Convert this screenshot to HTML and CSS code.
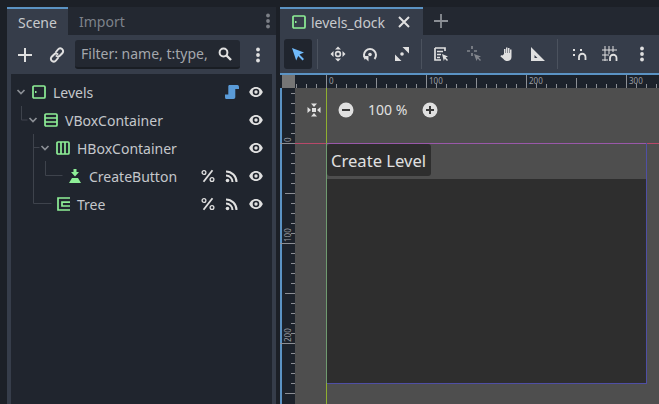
FILE: index.html
```html
<!DOCTYPE html>
<html lang="en">
<head>
<meta charset="utf-8">
<title>levels_dock</title>
<link rel="stylesheet" href="styles.css">
</head>
<body>
<svg class="defs" width="0" height="0">
  <defs>
    <symbol id="eye" viewBox="0 0 14 14"><path d="M7 2C3.5 2 1.2 4.5.2 7c1 2.5 3.3 5 6.800 5s5.800-2.500 6.800-5C12.800 4.500 10.500 2 7 2zm0 1.700A3.300 3.300 0 1 1 7 10.300 3.300 3.300 0 0 1 7 3.700z" fill="#e0e0e0"/><circle cx="7" cy="7" r="1.700" fill="#e0e0e0"/></symbol>
    <symbol id="pct" viewBox="0 0 14 14"><path d="M11.500 1.200 2.500 12.800" stroke="#e0e0e0" stroke-width="1.800" fill="none"/><circle cx="3" cy="3.500" r="1.900" stroke="#e0e0e0" stroke-width="1.300" fill="none"/><circle cx="11" cy="10.500" r="1.900" stroke="#e0e0e0" stroke-width="1.300" fill="none"/></symbol>
    <symbol id="sig" viewBox="0 0 14 14"><circle cx="2.500" cy="11.500" r="1.800" fill="#e0e0e0"/><path d="M1 6.500a6.500 6.500 0 0 1 6.500 6.500M1 2.500A10.500 10.500 0 0 1 11.500 13" stroke="#e0e0e0" stroke-width="2" fill="none"/></symbol>
    <symbol id="dots" viewBox="0 0 4 16"><circle cx="2" cy="2.500" r="1.900"/><circle cx="2" cy="8" r="1.900"/><circle cx="2" cy="13.500" r="1.900"/></symbol>
  </defs>
</svg>
<div class="app">
  <section class="dock-left">
    <div class="tabbar">
      <div class="tab tab-on">Scene</div>
      <div class="tab tab-off">Import</div>
      <svg class="grip" viewBox="0 0 4 16"><use href="#dots"/></svg>
    </div>
    <div class="scene-tools">
      <svg class="ico16" viewBox="0 0 16 16"><path d="M8 1v14M1 8h14" stroke="#e0e0e0" stroke-width="2" fill="none"/></svg>
      <svg class="ico16 link" viewBox="0 0 16 16"><g stroke="#e0e0e0" stroke-width="2" fill="none" stroke-linecap="round"><path d="M7 5l2-2.500a2.800 2.800 0 0 1 4.500 3.500L11 8.500a2.800 2.800 0 0 1-3.500.5"/><path d="M9 11l-2 2.500A2.800 2.800 0 0 1 2.500 10L5 7.500a2.800 2.800 0 0 1 3.500-.5"/></g></svg>
      <div class="filter">
        <span class="filter-text">Filter: name, t:type,</span>
        <svg class="ico14" viewBox="0 0 14 14"><circle cx="5.500" cy="5.500" r="3.900" stroke="#e0e0e0" stroke-width="2" fill="none"/><path d="M8.500 8.500 13 13" stroke="#e0e0e0" stroke-width="2.400"/></svg>
      </div>
      <svg class="menu-dots" viewBox="0 0 4 16"><use href="#dots"/></svg>
    </div>
    <div class="tree">
      <svg class="guides" width="261" height="150"><path d="M10.500 32v14h6M22.500 60v69.500h18M22.500 73.500h6M34.500 87v14.500h17" stroke="#3e434c" fill="none"/></svg>
      <div class="row d0">
        <svg class="arrow" viewBox="0 0 10 10"><path d="M1.500 3 5 6.500 8.500 3" stroke="#8b8f95" stroke-width="1.700" fill="none"/></svg>
        <svg class="node" viewBox="0 0 14 14"><rect x="1" y="1" width="12" height="12" rx="1" stroke="#8eef97" stroke-width="1.700" fill="none"/><rect x="3" y="6" width="1.500" height="2" fill="#8eef97"/></svg>
        <span class="name">Levels</span>
        <svg class="st script" viewBox="0 0 14 14"><path d="M4.500 0H12.500C13.500 0 14 1 14 2.500V4H10.300V12C10.300 13.300 9.500 14 8.500 14H1C.3 14 0 13 0 11.500V9.500H3.300V1.500C3.300 .5 3.800 0 4.500 0z" fill="#5a9bd8"/></svg>
        <svg class="st" viewBox="0 0 14 14"><use href="#eye"/></svg>
      </div>
      <div class="row d1">
        <svg class="arrow" viewBox="0 0 10 10"><path d="M1.500 3 5 6.500 8.500 3" stroke="#8b8f95" stroke-width="1.700" fill="none"/></svg>
        <svg class="node" viewBox="0 0 14 14"><rect x="1" y="1" width="12" height="12" rx="1" stroke="#8eef97" stroke-width="1.700" fill="none"/><path d="M1 5h12M1 9h12" stroke="#8eef97" stroke-width="1.700"/></svg>
        <span class="name">VBoxContainer</span>
        <svg class="st" viewBox="0 0 14 14"><use href="#eye"/></svg>
      </div>
      <div class="row d2">
        <svg class="arrow" viewBox="0 0 10 10"><path d="M1.500 3 5 6.500 8.500 3" stroke="#8b8f95" stroke-width="1.700" fill="none"/></svg>
        <svg class="node" viewBox="0 0 14 14"><rect x="1" y="1" width="12" height="12" rx="1" stroke="#8eef97" stroke-width="1.700" fill="none"/><path d="M5 1v12M9 1v12" stroke="#8eef97" stroke-width="1.700"/></svg>
        <span class="name">HBoxContainer</span>
        <svg class="st" viewBox="0 0 14 14"><use href="#eye"/></svg>
      </div>
      <div class="row d3">
        <svg class="node" viewBox="0 0 14 14"><path d="M5.500 0h3v3H11L7 7.500 3 3h2.500zM4 9h6l3 5H1z" fill="#8eef97"/></svg>
        <span class="name">CreateButton</span>
        <svg class="st" viewBox="0 0 14 14"><use href="#pct"/></svg>
        <svg class="st" viewBox="0 0 14 14"><use href="#sig"/></svg>
        <svg class="st" viewBox="0 0 14 14"><use href="#eye"/></svg>
      </div>
      <div class="row d4">
        <svg class="node" viewBox="0 0 14 14"><path d="M14 1H2V13H14M14 5.200H6V9H14" stroke="#8eef97" stroke-width="1.700" fill="none"/></svg>
        <span class="name">Tree</span>
        <svg class="st" viewBox="0 0 14 14"><use href="#pct"/></svg>
        <svg class="st" viewBox="0 0 14 14"><use href="#sig"/></svg>
        <svg class="st" viewBox="0 0 14 14"><use href="#eye"/></svg>
      </div>
    </div>
  </section>

  <section class="dock-right">
    <div class="tabbar">
      <div class="tab tab-on tab-file">
        <svg class="node" viewBox="0 0 14 14"><rect x="1" y="1" width="12" height="12" rx="1" stroke="#8eef97" stroke-width="1.700" fill="none"/><rect x="3" y="6" width="1.500" height="2" fill="#8eef97"/></svg>
        <span class="file-name">levels_dock</span>
        <svg class="close" viewBox="0 0 12 12"><path d="M1 1l10 10M11 1 1 11" stroke="#e0e0e0" stroke-width="2"/></svg>
      </div>
      <svg class="newtab" viewBox="0 0 14 14"><path d="M7 0v14M0 7h14" stroke="#8b8f95" stroke-width="1.800"/></svg>
    </div>
    <div class="toolbar">
      <div class="tool tool-on"><svg viewBox="0 0 16 16"><path d="M2 2l12 4.500-4.500 2L14 13l-1.500 1.500-4.300-4.500-2 4.500z" fill="#70bafa"/></svg></div>
      <i class="sep"></i>
      <div class="tool"><svg viewBox="0 0 16 16"><path d="M8 .5 11 3.500H5zM8 15.500 11 12.500H5zM.5 8 3.500 5V11zM15.500 8 12.500 5V11z" fill="#e0e0e0"/><circle cx="8" cy="8" r="2.400" stroke="#e0e0e0" stroke-width="1.600" fill="none"/></svg></div>
      <div class="tool"><svg viewBox="0 0 16 16"><path d="M3.500 13A6 6 0 1 1 12.500 13" stroke="#e0e0e0" stroke-width="2" fill="none"/><path d="M1 10h5.500v5.500z" fill="#e0e0e0"/><circle cx="8" cy="8.500" r="1.800" fill="#e0e0e0"/></svg></div>
      <div class="tool"><svg viewBox="0 0 16 16"><path d="M8.500 1H15V7.500zM1 8.500V15H7.500z" fill="#e0e0e0"/><circle cx="8" cy="8" r="1.800" fill="#e0e0e0"/></svg></div>
      <i class="sep sep2"></i>
      <div class="tool t-list"><svg viewBox="0 0 16 16"><path d="M2 2h10v3M2 2v12h6M4 5.500h6M4 8.500h4M4 11.500h3" stroke="#e0e0e0" stroke-width="1.700" fill="none"/><path d="M9 8l6 2.500-2.300 1L15 14l-1 1-2.200-2.300L10.800 15z" fill="#e0e0e0"/></svg></div>
      <div class="tool t-dim"><svg viewBox="0 0 16 16"><path d="M5 0v3M5 7v3M0 5h3M7 5h3" stroke="#e0e0e0" stroke-width="1.700"/><path d="M7 8l7 2.500-2.500 1L14 14l-1 1-2.300-2.500L9.500 15z" fill="#e0e0e0"/></svg></div>
      <div class="tool t-hand"><svg viewBox="0 0 16 16"><path d="M5 8V3h1.500v4H7V1.500h1.500V7H9V2h1.500v5h.5V3.500h1.500V11c0 2.500-1.500 4-4 4-2 0-3-.5-4-2L1.500 10.500c0-1 1-1.500 2-1z" fill="#e0e0e0"/></svg></div>
      <div class="tool t-ruler"><svg viewBox="0 0 16 16"><path fill-rule="evenodd" d="M1 1l14 14H1zM4.500 9v3h3z" fill="#e0e0e0"/></svg></div>
      <i class="sep sep2 sep3"></i>
      <div class="tool t-snap"><svg viewBox="0 0 16 16"><path d="M7 14v-3a3 3 0 0 1 6.500 0v3" stroke="#e0e0e0" stroke-width="1.800" fill="none"/><path d="M1 3h2v2H1zM8 3h2v2H8zM1 8h2v2H1z" fill="#e0e0e0"/></svg></div>
      <div class="tool"><svg viewBox="0 0 16 16"><path d="M8 15v-3a3 3 0 0 1 6.500 0v3" stroke="#e0e0e0" stroke-width="1.800" fill="none"/><path d="M0 4h15M0 9h7M0 14h6M3 0v15M11 0v6M7 0v8" stroke="#e0e0e0" stroke-width="1"/></svg></div>
      <svg class="menu-dots tool-dots" viewBox="0 0 4 16"><use href="#dots"/></svg>
    </div>
    <div class="editor">
      <svg class="ruler-top" width="379" height="13">
        <rect x="2" width="13" height="13" fill="#767676"/>
        <path d="M16.500 9v4M26.500 9v4M36.500 9v4M56.500 9v4M66.500 9v4M76.500 9v4M86.500 9v4M106.500 9v4M116.500 9v4M126.500 9v4M136.500 9v4M156.500 9v4M166.500 9v4M176.500 9v4M186.500 9v4M206.500 9v4M216.500 9v4M226.500 9v4M236.500 9v4M256.500 9v4M266.500 9v4M276.500 9v4M286.500 9v4M306.500 9v4M316.500 9v4M326.500 9v4M336.500 9v4M356.500 9v4M366.500 9v4M376.500 9v4M96.500 3v10M196.500 3v10M296.500 3v10M46.500 0v13M146.500 0v13M246.500 0v13M346.500 0v13" stroke="#8b8e94"/>
      </svg>
      <div class="labels-top"><span>0</span><span>100</span><span>200</span><span>300</span></div>
      <div class="canvas-row">
        <div class="ruler-left">
          <svg width="15" height="316"><path d="M11 5.500h4M11 15.500h4M11 25.500h4M11 35.500h4M11 45.500h4M11 65.500h4M11 75.500h4M11 85.500h4M11 95.500h4M11 115.500h4M11 125.500h4M11 135.500h4M11 145.500h4M11 165.500h4M11 175.500h4M11 185.500h4M11 195.500h4M11 215.500h4M11 225.500h4M11 235.500h4M11 245.500h4M11 265.500h4M11 275.500h4M11 285.500h4M11 295.500h4M5 105.500h10M5 205.500h10M5 305.500h10M0 55.500h15M0 155.500h15M0 255.500h15" stroke="#8b8e94"/><text class="vlabel" transform="translate(11 54) rotate(-90)">0</text><text class="vlabel" transform="translate(11 154) rotate(-90)">100</text><text class="vlabel" transform="translate(11 254) rotate(-90)">200</text></svg>
        </div>
        <div class="viewport">
          <div class="hline"></div>
          <div class="zoombar">
            <svg class="zoom-reset" viewBox="0 0 14 14"><path d="M4 .5h6L7 4zM4 13.500h6L7 10zM.5 4v6L4 7zM13.500 4v6L10 7z" fill="#e0e0e0"/><rect x="5" y="5" width="4" height="4" fill="#e0e0e0"/></svg>
            <svg class="zoom-btn" viewBox="0 0 16 16"><circle cx="8" cy="8" r="7.500" fill="#e0e0e0"/><path d="M4 8h8" stroke="#3a3a3a" stroke-width="2"/></svg>
            <span class="zoom-val">100 %</span>
            <svg class="zoom-btn zoom-plus" viewBox="0 0 16 16"><circle cx="8" cy="8" r="7.500" fill="#e0e0e0"/><path d="M4 8h8M8 4v8" stroke="#3a3a3a" stroke-width="2"/></svg>
          </div>
          <div class="create-btn">Create Level</div>
          <div class="tree-rect"></div>
          <div class="frame"></div>
          <div class="vline"></div>
        </div>
      </div>
    </div>
  </section>
</div>
</body>
</html>
```
FILE: styles.css
```css
* { box-sizing: border-box; }
html, body { margin: 0; height: 100%; overflow: hidden; }
body { background: #1c2027; font-family: "Noto Sans", sans-serif; font-size: 14px; color: #c8cacd; }
.defs { position: absolute; }
.app { display: flex; height: 404px; padding-top: 7px; padding-left: 7px; gap: 4px; }
.dock-left { width: 269px; display: flex; flex-direction: column; background: #363d4a; }
.dock-right { flex: 1; min-width: 0; display: flex; flex-direction: column; background: #363d4a; }

.tabbar { height: 28px; display: flex; align-items: stretch; background: #232831; flex: none; }
.tab { display: flex; align-items: center; height: 28px; }
.tab-on { background: #363d4a; border-top: 2px solid #5b93c4; color: #c8cacd; padding: 0 11px; width: 61px; }
.tab-off { color: #7d828a; padding-left: 11px; }
.grip { width: 4px; height: 16px; fill: #7c8087; margin: 6px 6px 0 auto; }

.scene-tools { height: 39px; display: flex; align-items: center; flex: none; padding-left: 10px; }
.ico16 { width: 16px; height: 16px; flex: none; }
.link { margin-left: 16px; }
.filter { margin-left: 10px; width: 165px; height: 29px; background: #232831; border-bottom: 2px solid #191d23; border-radius: 3px; display: flex; align-items: center; padding: 0 8px 0 6px; color: #a4a7ac; }
.filter-text { flex: 1; white-space: nowrap; }
.ico14 { width: 14px; height: 14px; flex: none; margin-left: 6px; }
.menu-dots { width: 4px; height: 16px; fill: #e0e0e0; margin-left: 16px; flex: none; }

.tree { position: relative; flex: 1; margin-left: 4px; margin-right: 4px; background: #20252e; padding-top: 4px; }
.guides { position: absolute; left: 0; top: 0; }
.row { height: 28px; display: flex; align-items: center; gap: 6px; padding-right: 9px; position: relative; }
.d0 { padding-left: 5px; }
.d1 { padding-left: 17px; }
.d2 { padding-left: 29px; }
.d3 { padding-left: 57px; }
.d4 { padding-left: 45px; }
.arrow { width: 10px; height: 10px; flex: none; }
.node { width: 14px; height: 14px; flex: none; margin-right: 1px; }
.name { flex: 1; color: #c4c7cb; }
.st { width: 14px; height: 14px; flex: none; margin-left: 4px; }

.tab-file { width: 143px; padding: 0 0 0 12px; }
.file-name { margin-left: 4px; color: #c8cacd; }
.close { width: 12px; height: 12px; margin-left: 13px; flex: none; }
.newtab { width: 14px; height: 14px; margin: 7px 0 0 11px; }

.toolbar { height: 38px; display: flex; align-items: center; flex: none; padding-left: 4px; }
.tool { width: 28px; height: 30px; display: flex; align-items: center; justify-content: center; flex: none; margin-right: 4px; }
.tool svg { width: 16px; height: 16px; }
.tool-on { background: #20252e; border-radius: 3px; margin-right: 0; }
.sep { width: 1px; height: 30px; background: #4b525e; margin: 0 6px 0 5px; flex: none; }
.sep2 { margin-left: 1px; margin-right: 5px; }
.sep3 { margin-right: 6px; }
.t-list { margin-right: 6px; }
.t-dim { margin-right: 3px; }
.t-dim svg { opacity: .45; }
.t-hand { margin-right: 3px; }
.t-hand svg, .t-ruler svg { margin-left: 2px; }
.t-snap svg { margin-left: 3px; }
.t-ruler { margin-right: 5px; }
.tool-dots { margin-left: 12px; }

.editor { position: relative; flex: 1; display: flex; flex-direction: column; border-top: 2px solid #5b93c4; background: #1c222b; min-height: 0; }
.ruler-top { display: block; flex: none; }
.labels-top { position: absolute; top: 0; left: 49px; display: flex; font-size: 8px; line-height: 12px; color: #9a9da2; }
.labels-top span { width: 100px; }
.labels-top span:last-child { width: auto; }
.canvas-row { flex: 1; display: flex; min-height: 0; padding-left: 2px; background: #5b93c4; }
.ruler-left { width: 13px; background: #1c222b; flex: none; }
.ruler-left svg { display: block; margin-left: -2px; overflow: hidden; }
.vlabel { font-size: 8px; fill: #9a9da2; font-family: "Noto Sans", sans-serif; }
.viewport { position: relative; flex: 1; background: #4e4e4e; overflow: hidden; }
.vline { position: absolute; left: 31px; top: 0; bottom: 0; width: 1px; background: linear-gradient(to bottom, #8fb030 55px, #6f9a70 55px 295px, #8fb030 295px); }
.hline { position: absolute; left: 0; right: 0; top: 55px; height: 1px; background: linear-gradient(to right, #b8486a 31px, #9a58aa 31px 351px, #b8486a 351px); }
.frame { position: absolute; left: 31px; top: 55px; width: 321px; height: 241px; border-right: 1px solid #4f4fa5; border-bottom: 1px solid #4f4fa5; }
.zoombar { position: absolute; left: 12px; top: 12px; display: flex; align-items: center; }
.zoom-reset { width: 14px; height: 14px; }
.zoom-btn { width: 16px; height: 16px; margin-left: 17px; }
.zoom-plus { margin-left: 0; }
.zoom-val { margin-left: 14px; width: 54px; color: #e0e0e0; font-size: 14px; }
.create-btn { position: absolute; left: 32px; top: 56px; width: 104px; height: 32px; background: #2e2e2e; border-radius: 3px; font-size: 16.6px; color: #e0e0e0; display: flex; align-items: center; padding-left: 4px; }
.tree-rect { position: absolute; left: 31px; top: 91px; width: 320px; height: 204px; background: #2e2e2e; }
```
